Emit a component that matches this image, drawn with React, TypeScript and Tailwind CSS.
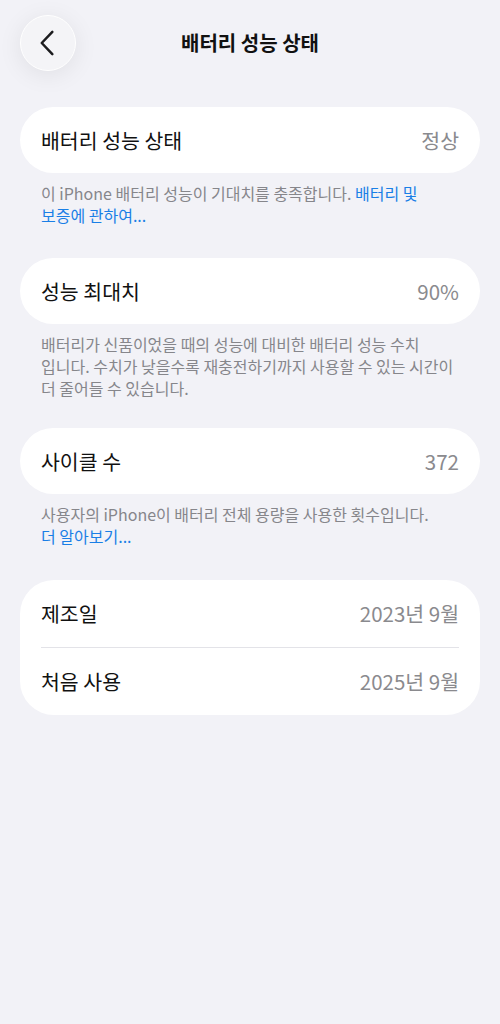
import React from "react";

const font = { fontFamily: '"Noto Sans CJK KR", "Noto Sans", sans-serif' };

function Row({ label, value }: { label: string; value: string }) {
  return (
    <div className="flex h-[67px] items-center justify-between px-[21px]">
      <span className="text-[20.5px] text-[#111111]">{label}</span>
      <span className="text-[20.5px] text-[#8a8a8e]">{value}</span>
    </div>
  );
}

function Footer({ children }: { children: React.ReactNode }) {
  return (
    <div className="px-[21px] pt-[9px] text-[16px] leading-[22px] text-[#86868b]">
      {children}
    </div>
  );
}

export default function App() {
  return (
    <div className="min-h-[1024px] w-[500px] bg-[#f2f2f7]" style={font}>
      <div className="relative flex h-[86px] items-center justify-center">
        <div className="absolute left-[20px] top-[15px] flex h-[56px] w-[56px] items-center justify-center rounded-full border border-white bg-[#f4f4f7] shadow-[0_4px_24px_rgba(0,0,0,0.08)]">
          <svg width="56" height="56" viewBox="0 0 56 56">
            <path d="M32.5 16.5 L21.5 28 L32.5 39.5" fill="none" stroke="#1c1c1e" strokeWidth="2.6" strokeLinecap="round" strokeLinejoin="round" />
          </svg>
        </div>
        <h1 className="text-[20px] font-bold text-[#111111]">배터리 성능 상태</h1>
      </div>

      <div className="px-[20px]">
        <div className="mt-[21px] h-[66px] rounded-full bg-white">
          <div className="flex h-full items-center justify-between px-[21px]">
            <span className="text-[20.5px] text-[#111111]">배터리 성능 상태</span>
            <span className="text-[20.5px] text-[#8a8a8e]">정상</span>
          </div>
        </div>
        <Footer>
          <div className="whitespace-nowrap">
            이 iPhone 배터리 성능이 기대치를 충족합니다. <span className="text-[#1a7fe6]">배터리 및</span>
          </div>
          <div className="whitespace-nowrap text-[#1a7fe6]">보증에 관하여...</div>
        </Footer>

        <div className="mt-[32px] h-[66px] rounded-full bg-white">
          <div className="flex h-full items-center justify-between px-[21px]">
            <span className="text-[20.5px] text-[#111111]">성능 최대치</span>
            <span className="text-[20.5px] text-[#8a8a8e]">90%</span>
          </div>
        </div>
        <Footer>
          <div className="whitespace-nowrap">배터리가 신품이었을 때의 성능에 대비한 배터리 성능 수치</div>
          <div className="whitespace-nowrap">입니다. 수치가 낮을수록 재충전하기까지 사용할 수 있는 시간이</div>
          <div className="whitespace-nowrap">더 줄어들 수 있습니다.</div>
        </Footer>

        <div className="mt-[29px] h-[66px] rounded-full bg-white">
          <div className="flex h-full items-center justify-between px-[21px]">
            <span className="text-[20.5px] text-[#111111]">사이클 수</span>
            <span className="text-[20.5px] text-[#8a8a8e]">372</span>
          </div>
        </div>
        <Footer>
          <div className="whitespace-nowrap">사용자의 iPhone이 배터리 전체 용량을 사용한 횟수입니다.</div>
          <div className="whitespace-nowrap text-[#1a7fe6]">더 알아보기...</div>
        </Footer>

        <div className="mt-[33px] rounded-[34px] bg-white">
          <Row label="제조일" value="2023년 9월" />
          <div className="mx-[21px] h-px bg-[#e3e3e8]" />
          <Row label="처음 사용" value="2025년 9월" />
        </div>
      </div>
    </div>
  );
}
